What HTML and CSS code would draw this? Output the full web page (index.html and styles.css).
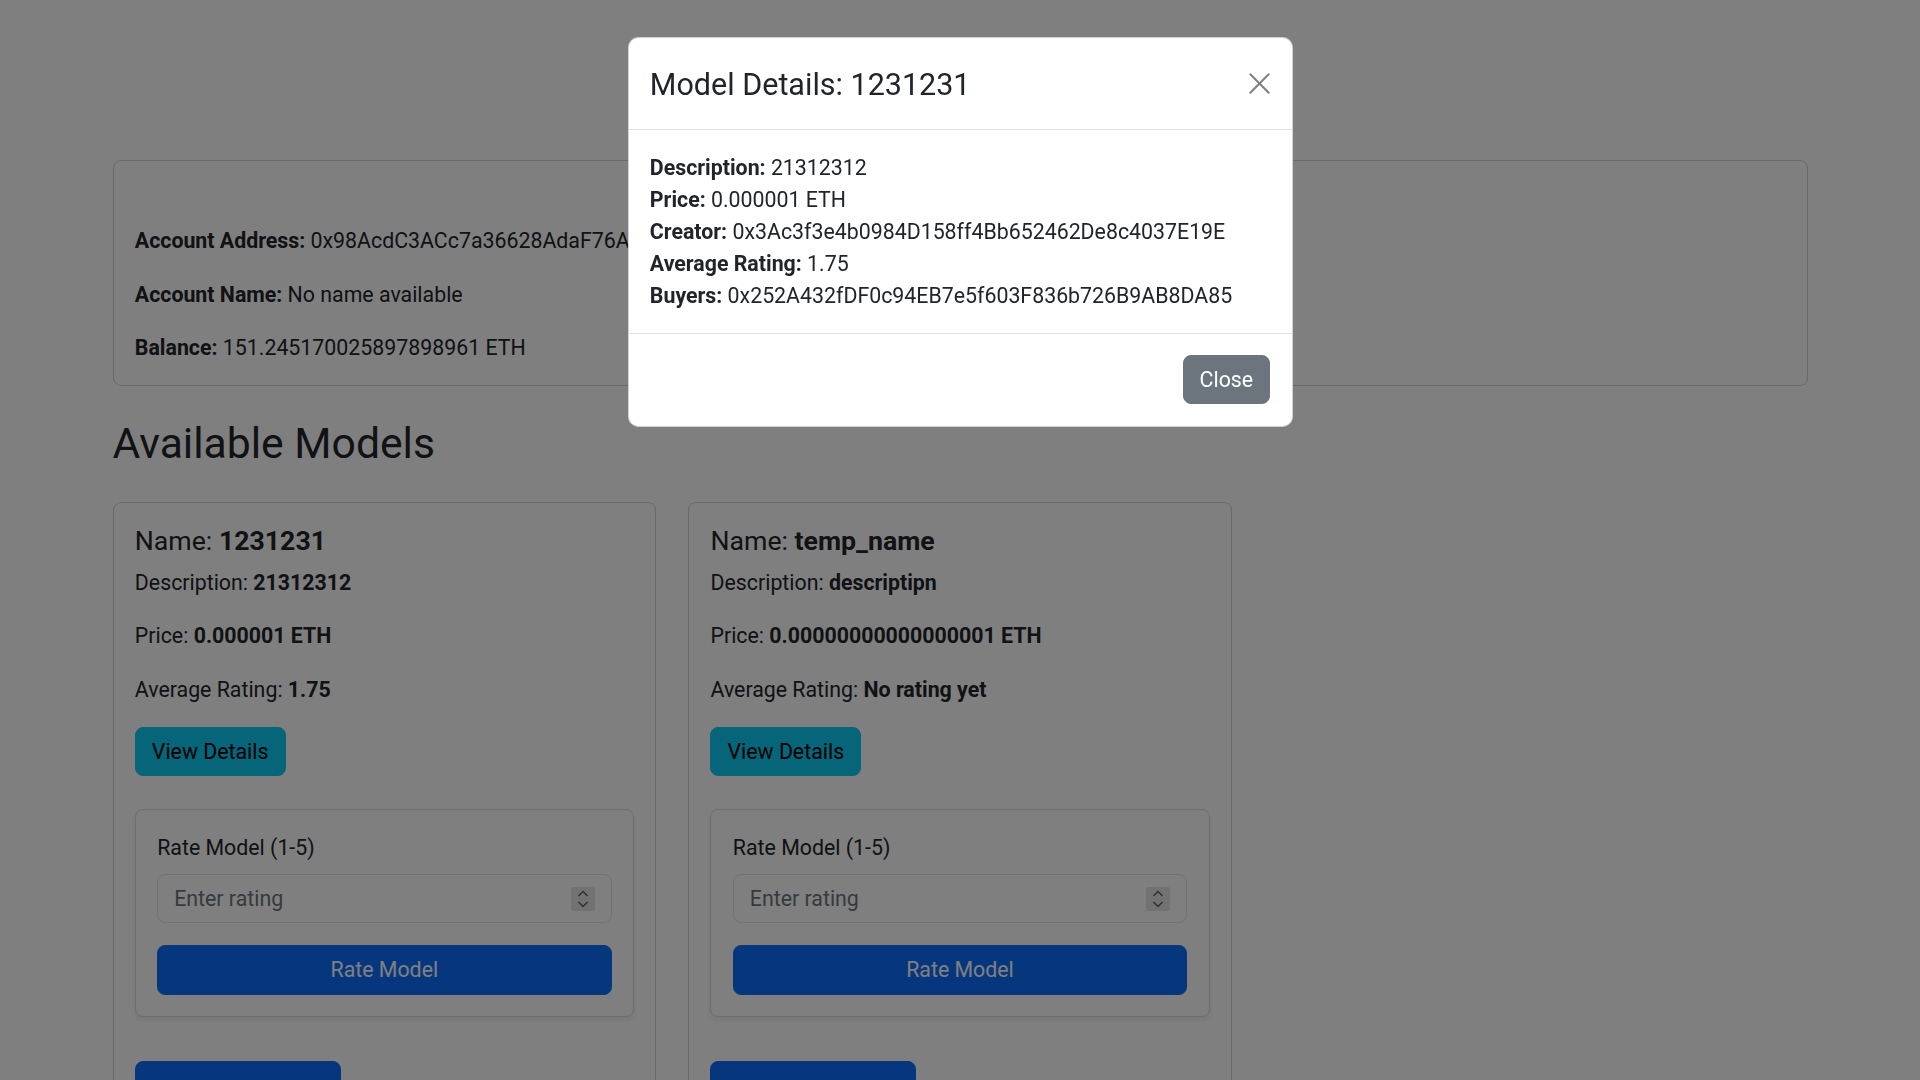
FILE: index.html
```html
<!DOCTYPE html>
<html lang="en">
<head>
<meta charset="utf-8">
<title>Model Marketplace</title>
<link rel="stylesheet" href="styles.css">
</head>
<body>
<main class="container">
  <section class="card account-card">
    <div class="card-title-spacer"></div>
    <p class="line"><strong>Account Address:</strong> 0x98AcdC3ACc7a36628AdaF76A7e2B4cD91f0A53E8</p>
    <p class="line"><strong>Account Name:</strong> No name available</p>
    <p class="line last"><strong>Balance:</strong> 151.245170025897898961 ETH</p>
  </section>

  <h2 class="section-title">Available Models</h2>

  <div class="model-grid">
    <article class="card model-card">
      <h5 class="model-name">Name: <strong>1231231</strong></h5>
      <p class="line">Description: <strong>21312312</strong></p>
      <p class="line">Price: <strong>0.000001 ETH</strong></p>
      <p class="line">Average Rating: <strong>1.75</strong></p>
      <button class="btn btn-info">View Details</button>
      <div class="rate-card">
        <label class="rate-label">Rate Model (1-5)</label>
        <div class="rate-input">
          <input type="text" placeholder="Enter rating">
          <span class="spinner"><svg width="24" height="24" viewBox="0 0 24 24"><polyline points="7.5,9 12,4.5 16.5,9" fill="none" stroke="#5c5c5c" stroke-width="1.4"/><polyline points="7.5,15 12,19.5 16.5,15" fill="none" stroke="#5c5c5c" stroke-width="1.4"/></svg></span>
        </div>
        <button class="btn btn-primary btn-block">Rate Model</button>
      </div>
      <button class="btn btn-primary btn-lg btn-buy">Buy Model</button>
    </article>

    <article class="card model-card">
      <h5 class="model-name">Name: <strong>temp_name</strong></h5>
      <p class="line">Description: <strong>descriptipn</strong></p>
      <p class="line">Price: <strong>0.00000000000000001 ETH</strong></p>
      <p class="line">Average Rating: <strong>No rating yet</strong></p>
      <button class="btn btn-info">View Details</button>
      <div class="rate-card">
        <label class="rate-label">Rate Model (1-5)</label>
        <div class="rate-input">
          <input type="text" placeholder="Enter rating">
          <span class="spinner"><svg width="24" height="24" viewBox="0 0 24 24"><polyline points="7.5,9 12,4.5 16.5,9" fill="none" stroke="#5c5c5c" stroke-width="1.4"/><polyline points="7.5,15 12,19.5 16.5,15" fill="none" stroke="#5c5c5c" stroke-width="1.4"/></svg></span>
        </div>
        <button class="btn btn-primary btn-block">Rate Model</button>
      </div>
      <button class="btn btn-primary btn-lg btn-buy">Buy Model</button>
    </article>
  </div>
</main>

<div class="backdrop"></div>

<div class="modal">
  <div class="modal-dialog">
    <div class="modal-header">
      <h4 class="modal-title">Model Details: 1231231</h4>
      <button class="btn-close" aria-label="Close">
        <svg width="21" height="21" viewBox="0 0 16 16"><path d="M1 1 L15 15 M15 1 L1 15" stroke="#000" stroke-width="1.5" stroke-linecap="round"/></svg>
      </button>
    </div>
    <div class="modal-body">
      <p class="mline"><strong>Description:</strong> 21312312</p>
      <p class="mline"><strong>Price:</strong> 0.000001 ETH</p>
      <p class="mline"><strong>Creator:</strong> 0x3Ac3f3e4b0984D158ff4Bb652462De8c4037E19E</p>
      <p class="mline"><strong>Average Rating:</strong> 1.75</p>
      <p class="mline"><strong>Buyers:</strong> 0x252A432fDF0c94EB7e5f603F836b726B9AB8DA85</p>
    </div>
    <div class="modal-footer">
      <button class="btn btn-secondary">Close</button>
    </div>
  </div>
</div>
</body>
</html>
```

FILE: styles.css
```css
* { box-sizing: border-box; }

html, body {
  margin: 0;
  padding: 0;
  height: 100%;
}

body {
  overflow: hidden;
  background: #ffffff;
  color: #212529;
  font-family: Roboto, "Liberation Sans", sans-serif;
  font-size: 21.33px;
  line-height: 32px;
}

strong { font-weight: 700; }

.container {
  width: 1695px;
  margin: 0 auto;
  padding-top: 160px;
}

.card {
  background: #fff;
  border: 1px solid #d3d3d4;
  border-radius: 8px;
  padding: 21.33px;
}

.account-card {
  margin-bottom: 32px;
}

.card-title-spacer {
  height: 43px;
}

.line {
  margin: 0 0 21.33px;
}

.line.last { margin-bottom: 0; }

.section-title {
  margin: 0 0 32px;
  font-size: 42.67px;
  line-height: 51.2px;
  font-weight: 400;
}

.model-grid {
  display: grid;
  grid-template-columns: repeat(3, 1fr);
  column-gap: 32px;
  align-items: start;
}

.model-card {
  display: flex;
  flex-direction: column;
  align-items: flex-start;
}

.model-name {
  margin: 0 0 10.17px;
  padding-top: 1px;
  font-size: 26.67px;
  line-height: 32px;
  font-weight: 400;
}

.btn {
  font-family: inherit;
  font-size: 21.33px;
  line-height: 32px;
  padding: 7.67px 16px;
  border: 1px solid transparent;
  border-radius: 8px;
  cursor: pointer;
}

.btn-lg {
  font-size: 26.67px;
  line-height: 40px;
  padding: 10.67px 21.33px;
}

.btn-info {
  background: #0dcaf0;
  border-color: #0dcaf0;
  color: #000;
}

.btn-primary {
  background: #0d6efd;
  border-color: #0d6efd;
  color: #fff;
}

.btn-secondary {
  background: #6c757d;
  border-color: #6c757d;
  color: #fff;
}

.rate-card {
  align-self: stretch;
  margin-top: 32.5px;
  margin-bottom: 44px;
  background: #fff;
  border: 1px solid #dcdcdc;
  border-radius: 8px;
  padding: 21.33px;
  box-shadow: 0 2.67px 5.33px rgba(0, 0, 0, 0.075);
  display: flex;
  flex-direction: column;
}

.rate-label {
  display: block;
  line-height: 34px;
  margin-bottom: 8.67px;
}

.rate-input {
  display: flex;
  align-items: center;
  height: 49.5px;
  border: 1px solid #dee2e6;
  border-radius: 8px;
  padding: 0 16px;
  margin-bottom: 22px;
  background: #fff;
}

.rate-input input {
  flex: 1;
  min-width: 0;
  border: 0;
  outline: 0;
  padding: 0;
  font-family: inherit;
  font-size: 21.33px;
  line-height: 32px;
  color: #212529;
  background: transparent;
}

.rate-input input::placeholder { color: #6c757d; }

.spinner {
  display: flex;
  width: 24px;
  height: 24px;
  background: #e4e4e4;
  border-radius: 2px;
}

.btn-block { width: 100%; }

.btn-buy { width: 206px; }

/* Modal */
.backdrop {
  position: fixed;
  inset: 0;
  background: rgba(0, 0, 0, 0.5);
}

.modal {
  position: fixed;
  inset: 0;
  display: flex;
  justify-content: center;
  align-items: flex-start;
  padding-top: 37.33px;
}

.modal-dialog {
  width: 665px;
  background: #fff;
  border: 1px solid rgba(0, 0, 0, 0.175);
  border-radius: 10.67px;
  overflow: hidden;
}

.modal-header {
  display: flex;
  align-items: center;
  justify-content: space-between;
  padding: 21.33px;
  border-bottom: 1px solid #dee2e6;
}

.modal-title {
  margin: 0;
  font-size: 30.5px;
  font-weight: 400;
  padding-top: 2px;
  line-height: 46px;
}

.btn-close {
  display: flex;
  padding: 0;
  border: 0;
  background: transparent;
  opacity: 0.5;
  cursor: pointer;
}

.modal-body {
  padding: 21.33px;
}

.mline {
  margin: 0;
  padding-top: 1px;
  line-height: 31px;
}

.modal-footer {
  display: flex;
  justify-content: flex-end;
  padding: 16px;
  border-top: 1px solid #dee2e6;
}

.modal-footer .btn { margin: 5.33px; }
```
